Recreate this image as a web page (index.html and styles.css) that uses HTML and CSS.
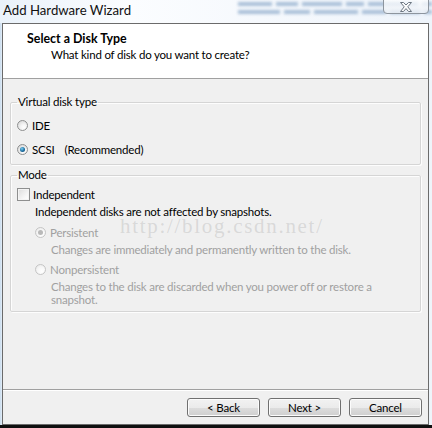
FILE: index.html
```html
<!DOCTYPE html>
<html>
<head>
<meta charset="utf-8">
<link rel="stylesheet" href="styles.css">
</head>
<body>
<div class="screen">
  <div class="titlebar">
    <div class="behind">
      <div class="bl"><span style="width:34px"></span><span style="width:22px"></span><span style="width:40px"></span><span style="width:18px"></span><span style="width:50px"></span><span style="width:30px"></span></div>
      <div class="bl"><span style="width:42px"></span><span style="width:26px"></span><span style="width:44px"></span><span style="width:24px"></span><span style="width:30px"></span><span style="width:40px"></span></div>
    </div>
    <span class="title">Add Hardware Wizard</span>
    <div class="close">
      <svg width="20" height="12" viewBox="0 0 20 12">
        <path d="M4.5 1.5 L7.5 1.5 L10 4 L12.5 1.5 L15.5 1.5 L11.8 5.8 L15.5 10.5 L12.5 10.5 L10 7.6 L7.5 10.5 L4.5 10.5 L8.2 5.8 Z" fill="#fbfbfb" stroke="#6d7782" stroke-width="1" stroke-linejoin="round"/>
      </svg>
    </div>
  </div>
  <div class="window">
    <div class="header">
      <div class="h-title">Select a Disk Type</div>
      <div class="h-sub">What kind of disk do you want to create?</div>
    </div>
    <div class="body">
      <fieldset class="group g1">
        <legend>Virtual disk type</legend>
        <label class="row"><span class="radio"></span>IDE</label>
        <label class="row"><span class="radio on"></span>SCSI<span class="rec">(Recommended)</span></label>
      </fieldset>
      <fieldset class="group g2">
        <legend>Mode</legend>
        <label class="row check-row"><span class="check"></span>Independent</label>
        <div class="indent">
          <div class="note">Independent disks are not affected by snapshots.</div>
          <label class="row sub-row dis"><span class="radio dim on"></span>Persistent</label>
          <div class="desc">Changes are immediately and permanently written to the disk.</div>
          <label class="row sub-row dis"><span class="radio dim"></span>Nonpersistent</label>
          <div class="desc">Changes to the disk are discarded when you power off or restore a<br>snapshot.</div>
        </div>
      </fieldset>
      <div class="watermark">http://blog.csdn.net/</div>
    </div>
    <div class="footer">
      <button class="btn">&lt; Back</button>
      <button class="btn">Next &gt;</button>
      <button class="btn">Cancel</button>
    </div>
  </div>
</div>
</body>
</html>
```
FILE: styles.css
```css
* { box-sizing: border-box; }
html, body { margin: 0; padding: 0; }
body {
  width: 432px;
  height: 428px;
  overflow: hidden;
  font-family: "Lato", "Liberation Sans", sans-serif;
  font-size: 11.5px;
  letter-spacing: -0.2px;
  color: #000;
}
.screen {
  width: 432px;
  height: 428px;
  display: flex;
  flex-direction: column;
  background:
    linear-gradient(to bottom, transparent 425px, #101010 425px),
    linear-gradient(to right, #c9dcee 0, #e4eef8 2px, #f4f8fc 40%, #eef4fa 100%);
}
.titlebar {
  height: 23px;
  flex: none;
  position: relative;
  display: flex;
  align-items: flex-start;
  justify-content: space-between;
  background: linear-gradient(to right, #eaf2fa, #fbfdff 30%, #f6f9fd 60%, #eef4fb);
}
.behind {
  position: absolute;
  left: 238px;
  top: 2px;
  width: 194px;
  overflow: hidden;
  filter: blur(1.4px);
  display: flex;
  flex-direction: column;
  gap: 4px;
}
.bl {
  display: flex;
  gap: 4px;
}
.bl span {
  display: block;
  height: 4px;
  flex: none;
  background: #a9bfd8;
}
.title {
  position: relative;
  margin-left: 3px;
  margin-top: 1px;
  font-size: 13.2px;
  letter-spacing: 0;
  line-height: 18px;
  color: #111;
}
.close {
  position: relative;
  width: 46px;
  height: 15px;
  margin-right: 3px;
  margin-top: -1px;
  border: 1px solid #8d959e;
  border-radius: 0 0 4px 4px;
  background: linear-gradient(to bottom, rgba(255,255,255,0.75), rgba(235,240,246,0.85));
  display: flex;
  align-items: center;
  justify-content: center;
}
.window {
  margin-left: 2px;
  width: 427px;
  height: 402px;
  flex: none;
  border: 1px solid #6b6b6b;
  display: flex;
  flex-direction: column;
  background: #f0f0f0;
}
.header {
  height: 55px;
  flex: none;
  background: #fff;
  border-bottom: 1px solid #a0a0a0;
  padding: 8px 0 0 24px;
}
.h-title {
  font-weight: bold;
  font-size: 12.4px;
  letter-spacing: 0;
  line-height: 14px;
}
.h-sub {
  margin-top: 2px;
  margin-left: 24px;
  line-height: 14px;
}
.body {
  height: 310px;
  flex: none;
  position: relative;
  padding: 16px 7px 0 7px;
}
.group {
  margin: 0;
  padding: 0 6px;
  border: 1px solid #d5d5d5;
  box-shadow: inset 1px 1px 0 #fdfdfd, 1px 1px 0 #fdfdfd;
  border-radius: 2px;
  min-width: 0;
}
.group legend {
  padding: 0 1px;
  line-height: 14px;
}
.g1 { padding-top: 4px; padding-bottom: 3px; }
.g2 { margin-top: 3px; padding-top: 1px; padding-bottom: 5px; }
.row {
  display: flex;
  align-items: center;
  height: 24px;
}
.radio {
  width: 11px;
  height: 11px;
  border-radius: 50%;
  border: 1px solid #8e8f8f;
  background: radial-gradient(circle at 65% 70%, #ffffff 0, #f2f2f2 40%, #cfcfcf 100%);
  margin-right: 4px;
  position: relative;
  flex: none;
}
.radio.on::after {
  content: "";
  position: absolute;
  left: 2px;
  top: 2px;
  width: 5px;
  height: 5px;
  border-radius: 50%;
  background: radial-gradient(circle at 40% 35%, #7ed0f2 0, #1b6fa3 55%, #0d3a5c 100%);
}
.radio.dim {
  border-color: #c5c5c5;
  background: radial-gradient(circle at 65% 70%, #ffffff 0, #f6f6f6 50%, #e4e4e4 100%);
}
.radio.dim.on::after {
  background: #b9b9b9;
}
.rec { margin-left: 10px; }
.check-row { height: 22px; }
.check {
  width: 13px;
  height: 13px;
  border: 1px solid #8e8f8f;
  background: linear-gradient(135deg, #dcdcdc, #f8f8f8 70%, #fff);
  box-shadow: inset 0 0 0 1px #f4f4f4;
  margin-right: 3px;
  flex: none;
}
.indent { padding-left: 18px; }
.note { line-height: 14px; }
.sub-row { height: 22px; margin-top: 2px; }
.dis { color: #a0a0a0; }
.desc {
  color: #a0a0a0;
  line-height: 13px;
  padding-left: 16px;
}
.watermark {
  position: absolute;
  left: 117px;
  top: 135px;
  font-family: "Liberation Serif", serif;
  font-size: 21px;
  letter-spacing: 1.7px;
  color: rgba(160, 160, 160, 0.3);
  pointer-events: none;
}
.footer {
  flex: 1;
  border-top: 1px solid #a0a0a0;
  box-shadow: inset 0 1px 0 #fff;
  display: flex;
  justify-content: flex-end;
  align-items: flex-start;
  gap: 8px;
  padding: 8px 6px 0 0;
}
.btn {
  width: 73px;
  height: 19px;
  padding: 0;
  font-family: inherit;
  font-size: 11.5px;
  letter-spacing: -0.2px;
  color: #000;
  border: 1px solid #707070;
  border-radius: 3px;
  background: linear-gradient(to bottom, #f2f2f2 0, #ebebeb 50%, #dddddd 51%, #cfcfcf 100%);
  box-shadow: inset 0 0 0 1px #fcfcfc;
}
```
